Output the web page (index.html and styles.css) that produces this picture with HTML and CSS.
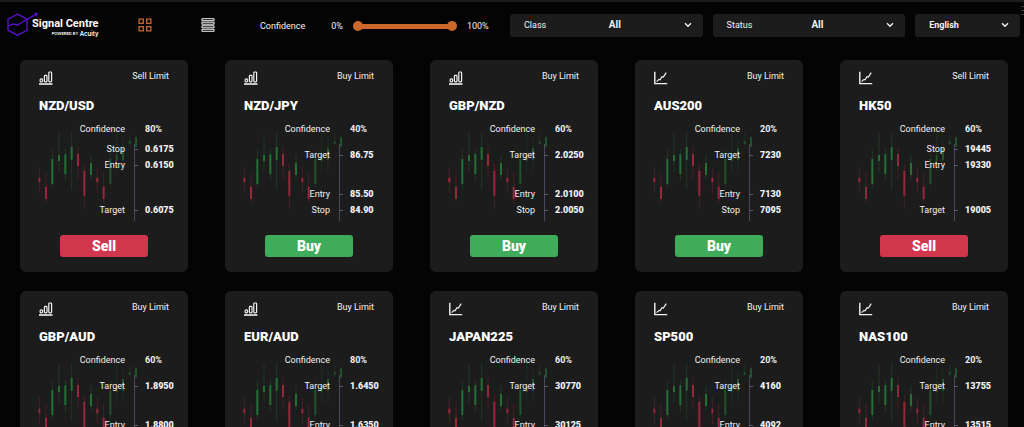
FILE: index.html
```html
<!DOCTYPE html>
<html lang="en">
<head>
<meta charset="utf-8">
<title>Signal Centre</title>
<link rel="stylesheet" href="styles.css">
</head>
<body>
<svg class="sprites" aria-hidden="true">
  <symbol id="bars" viewBox="0 0 14 14"><path d="M0 13H13.5" stroke-width="1.6"/><rect x="1.1" y="7.8" width="2.5" height="3" rx="1.1"/><rect x="5.4" y="4.4" width="2.6" height="6.4" rx=".8"/><rect x="9.8" y="1" width="2.8" height="9.8" rx=".8"/></symbol>
  <symbol id="line" viewBox="0 0 14 14"><path d="M.8 .8V12.6H13.2" stroke-width="1.4"/><path d="M2.6 10.6 5 8.4 6 8.8 8 5.6 9.4 6 12.2 1.6"/></symbol>
  <symbol id="candles" viewBox="84 240 300 240">
    <g class="down"><path class="wick" d="M88 350V430M108 370V458M204 290V388M223 342V476M262 350V430M281 370V458"/><path class="body" d="M88 383V397M108 410V447M204 312V348M223 362V437M262 383V397M281 410V447"/></g>
    <g class="up"><path class="wick" d="M127 300V415M147 250V365M166 297V392M185 247V420M243 315V388"/><path class="body" d="M127 327V402M147 315V333M166 313V372M185 291V329M243 339V375"/></g>
    <g class="up fading"><path class="wick" d="M301 300V415M320 250V365M339 267V366M359 250V285M378 258V292"/><path class="body" d="M301 327V402M320 315V333M339 294V330M359 274V281M378 262V290"/></g>
  </symbol>
</svg>

<header class="toolbar">
  <a class="logo" href="#" aria-label="Signal Centre, powered by Acuity">
    <svg class="logo-mark" viewBox="0 0 32 26"><path d="M10.5 2.2 20 7.2V18.4L10.5 23.2 1 18.4V7.2Z"/><path d="M1 14 6.5 12 10.5 13 28 2.8"/><path class="tip" d="M31 1 29.5 4.8 26.8 1.2Z"/></svg>
    <span class="logo-text"><span class="logo-name">Signal Centre</span><span class="logo-by"><small>POWERED BY</small> Acuity</span></span>
  </a>
  <div class="views">
    <button class="view active" aria-label="Grid view"><svg viewBox="0 0 14 14"><path d="M1.1 1.1H5.3V5.3H1.1ZM8.7 1.1H12.9V5.3H8.7ZM1.1 8.7H5.3V12.9H1.1ZM8.7 8.7H12.9V12.9H8.7Z"/></svg></button>
    <button class="view list" aria-label="List view"><svg viewBox="0 0 14 14"><path d="M.9 .7H13.1V2.7H.9ZM.9 4.2H13.1V6.2H.9ZM.9 7.8H13.1V9.8H.9ZM.9 11.3H13.1V13.3H.9Z"/></svg></button>
  </div>
  <div class="confidence">
    <span id="conf">Confidence</span>
    <output class="low">0%</output>
    <div class="range">
      <input type="range" aria-labelledby="conf" min="0" max="100" value="0">
      <input type="range" aria-labelledby="conf" min="0" max="100" value="100">
    </div>
    <output>100%</output>
  </div>
  <div class="filters">
    <label class="filter"><span>Class</span><select><option>All</option></select><svg class="chevron" viewBox="0 0 8 6"><path d="M1 1.2 4 4.2 7 1.2"/></svg></label>
    <label class="filter"><span>Status</span><select><option>All</option></select><svg class="chevron" viewBox="0 0 8 6"><path d="M1 1.2 4 4.2 7 1.2"/></svg></label>
    <label class="filter language"><select aria-label="Language"><option>English</option></select><svg class="chevron" viewBox="0 0 8 6"><path d="M1 1.2 4 4.2 7 1.2"/></svg></label>
  </div>
  <svg class="handle" viewBox="0 0 3 11" aria-hidden="true"><path d="M0 1.5H3M0 5.5H3M0 9.5H3"/></svg>
</header>
<main class="cards" id="cards"></main>
<script src="cards.js"></script>
</body>
</html>
```
FILE: styles.css
```css
* { box-sizing: border-box; }
body { margin: 0; background: #040404; color: #f2f2f2; font: 9px/16px Roboto, sans-serif; border-top: 2px solid #1c1c1c; }
button, select { font: inherit; color: inherit; border: 0; background: none; padding: 0; }
svg { fill: none; stroke: currentColor; }
.sprites { position: absolute; width: 0; height: 0; }

.toolbar { position: relative; display: flex; align-items: center; height: 46px; padding: 0 4px 0 7px; }
.handle { position: absolute; top: 3px; right: 0; width: 3px; height: 11px; stroke: #3a3a3a; }
.logo { display: flex; align-items: flex-start; width: 131px; color: #fff; text-decoration: none; }
.logo-mark { width: 32px; height: 26px; stroke: #5b12d6; stroke-width: 1.3; }
.logo-mark .tip { fill: #5b12d6; stroke: none; }
.logo-text { display: flex; flex-direction: column; margin-left: -7px; padding-top: 5px; }
.logo-name { font: 700 11px/13px Roboto, sans-serif; white-space: nowrap; }
.logo-by { font: 600 6px/7px Inter, sans-serif; text-align: right; }
.logo-by small { font-size: 4px; vertical-align: 1px; }
.views { display: flex; gap: 49px; width: 122px; }
.view { width: 14px; height: 14px; }
.view svg { display: block; width: 14px; height: 14px; stroke-width: 1.3; }
.view.active { color: #c9662a; }
.view.list svg { stroke-width: 1; }

.confidence { display: flex; align-items: center; width: 250px; padding-top: 2px; }
.low { margin-left: 26px; }
.range { display: grid; width: 104px; margin: 0 10px 0 10px; background: linear-gradient(#cd682b, #cd682b) center / 98px 5px no-repeat; }
.range input { grid-area: 1 / 1; width: 100%; height: 10px; margin: 0; appearance: none; background: none; pointer-events: none; }
.range input::-webkit-slider-thumb { appearance: none; width: 10px; height: 10px; border-radius: 50%; background: #cd682b; pointer-events: auto; }

.filters { display: grid; flex: 1; grid-template-columns: 193fr 193fr 105fr; gap: 10px; }
.filter { display: grid; grid-template-columns: 1fr 1fr 1fr; align-items: center; height: 23px; padding: 0 11px 0 14px; background: #1c1c1c; border-radius: 3px; }
.filter select { appearance: none; font-weight: 700; text-align: center; text-align-last: center; }
.filter span + select { padding-left: 14px; font-size: 10px; }
.filter.language { grid-template-columns: 1fr 8px; }
.language select { text-align: left; text-align-last: left; }
.chevron { width: 8px; height: 6px; justify-self: end; stroke-width: 1.4; }

.cards { display: grid; grid-template-columns: repeat(5, 1fr); gap: 19px 37px; padding: 12px 16px 19px 20px; }
.card { position: relative; padding: 8px 0 15px; background: #1c1c1c; border-radius: 6px; }
.card-top { display: flex; justify-content: space-between; padding: 0 19px; }
.type-icon { width: 14px; height: 14px; margin-top: 3px; stroke-width: 1.2; }
.card h2 { margin: 11px 19px 5px; color: #fff; font-size: 13px; line-height: 20px; font-weight: 900; }
.backdrop { position: absolute; top: 70px; left: 18px; width: 100px; height: 80px; }
.down { stroke: #96283a; }
.up { stroke: #236f36; }
.wick { stroke-width: 2; opacity: .55; }
.body { stroke-width: 6; }
.fading { opacity: .65; }
.row { display: grid; grid-template-columns: 105px 1fr; column-gap: 20px; position: relative; }
.row dt { text-align: right; }
.row dd { margin: 0; font-weight: 700; }
.levels, .summary { margin: 0; }
.summary { padding-bottom: 4px; }
.levels { display: flex; flex-direction: column; min-height: 80px; padding-bottom: 3px; background: linear-gradient(#4b475f, #4b475f) 114px 3px / 1px 100% no-repeat; }
.levels .row { grid-template-columns: 105px 4px 1fr; column-gap: 9px; }
.levels .row::before { content: ""; grid-area: 1 / 2; height: 1px; align-self: center; background: #5c5872; }
.levels dd { grid-column: 3; margin-left: -2px; font-weight: 900; }
.buy .levels { padding-top: 6px; }
.buy .row:nth-child(2), .sell .row:nth-child(3) { margin-top: auto; }
.action { display: block; width: 88px; height: 22px; margin: 14px auto 0; border-radius: 3px; color: #fff; font-size: 14px; font-weight: 900; }
.buy .action { background: #3eac5b; }
.sell .action { background: #d0374c; }
```
FILE: cards.js
```js
const signals = [
  ["NZD/USD", "sell", "bars", "80%", ["0.6175", "0.6150", "0.6075"]],
  ["NZD/JPY", "buy", "bars", "40%", ["86.75", "85.50", "84.90"]],
  ["GBP/NZD", "buy", "bars", "60%", ["2.0250", "2.0100", "2.0050"]],
  ["AUS200", "buy", "line", "20%", ["7230", "7130", "7095"]],
  ["HK50", "sell", "line", "60%", ["19445", "19330", "19005"]],
  ["GBP/AUD", "buy", "bars", "60%", ["1.8950", "1.8800", "1.8750"]],
  ["EUR/AUD", "buy", "bars", "80%", ["1.6450", "1.6350", "1.6310"]],
  ["JAPAN225", "buy", "line", "60%", ["30770", "30125", "29870"]],
  ["SP500", "buy", "line", "20%", ["4160", "4092", "4065"]],
  ["NAS100", "buy", "line", "20%", ["13755", "13515", "13415"]]
];
const labels = { sell: ["Stop", "Entry", "Target"], buy: ["Target", "Entry", "Stop"] };
const names = { sell: "Sell", buy: "Buy" };

document.getElementById("cards").innerHTML = signals.map(([pair, side, icon, confidence, prices]) => `
  <article class="card ${side}">
    <svg class="backdrop" aria-hidden="true"><use href="#candles"/></svg>
    <div class="card-top"><svg class="type-icon" aria-hidden="true"><use href="#${icon}"/></svg><span>${names[side]} Limit</span></div>
    <h2>${pair}</h2>
    <dl class="summary"><div class="row"><dt>Confidence</dt><dd>${confidence}</dd></div></dl>
    <dl class="levels">${prices.map((price, i) => `<div class="row"><dt>${labels[side][i]}</dt><dd>${price}</dd></div>`).join("")}</dl>
    <button class="action">${names[side]}</button>
  </article>`).join("");
```
